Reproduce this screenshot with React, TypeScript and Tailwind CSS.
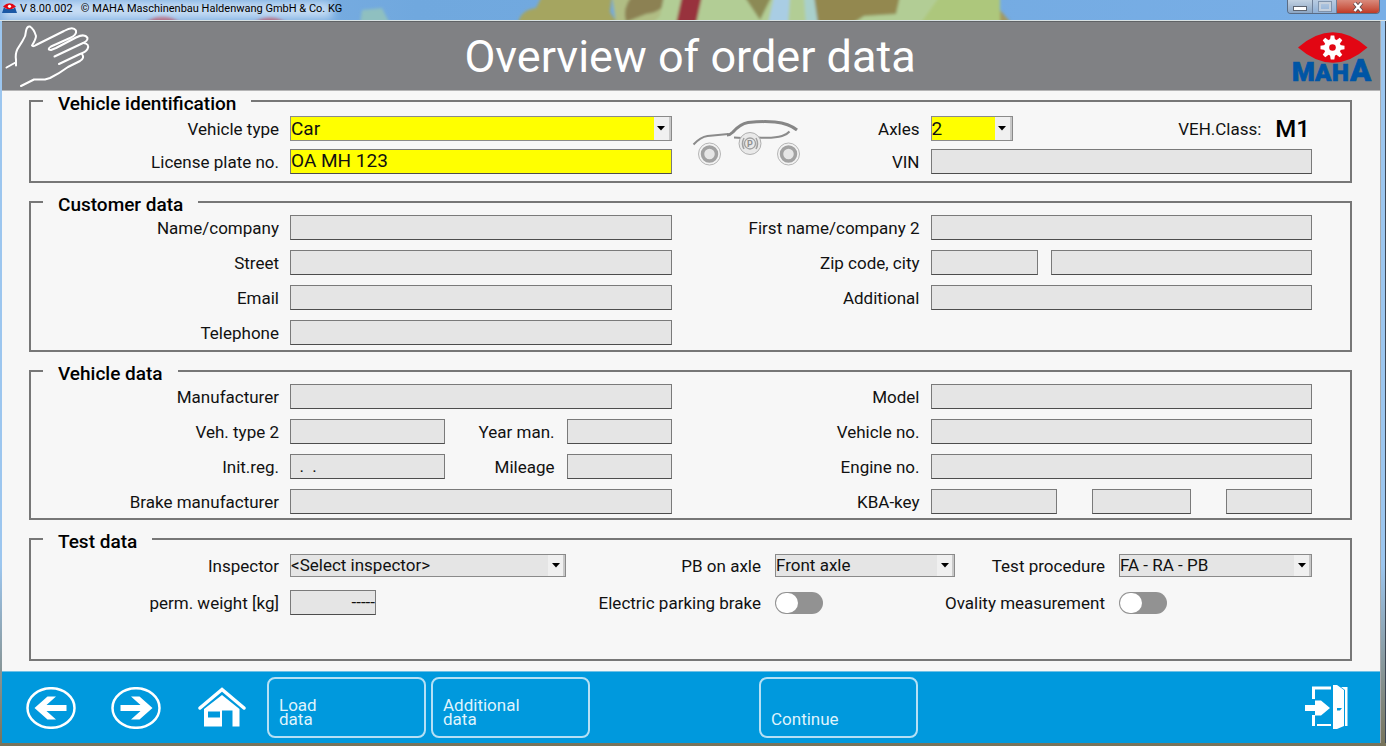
import { useState } from 'react';
import type { ReactNode } from 'react';
import clsx from 'clsx';

const boxStyle = 'h-[25px] min-w-0 border border-[#7a7a7a] border-b-[#4d4d4d] bg-[#e5e5e5] outline-none';

function Label({ id, children, className }: { id: string; children: ReactNode; className?: string }) {
  return (
    <label htmlFor={id} className={clsx('self-center justify-self-end text-right leading-5 whitespace-nowrap', className)}>
      {children}
    </label>
  );
}

function TextBox({ id, value = '', label, className }: { id: string; value?: string; label?: string; className?: string }) {
  return <input id={id} type="text" aria-label={label} defaultValue={value} className={clsx(boxStyle, className)} />;
}

function SelectBox({ id, options, yellow, className }: { id: string; options: string[]; yellow?: boolean; className?: string }) {
  return (
    <div className={clsx('relative', className)}>
      <select
        id={id}
        className={clsx(
          'block w-full appearance-none border border-[#8a8a8a] outline-none',
          yellow ? 'h-[25px] bg-[#ffff00] text-[19px] leading-5' : 'h-[23px] bg-[#e5e5e5] pb-px text-[17px] leading-5',
        )}
      >
        {options.map((o) => (
          <option key={o}>{o}</option>
        ))}
      </select>
      <span className="pointer-events-none absolute inset-y-px right-px flex w-[17px] items-center justify-center border-r-2 border-[#c8c8c8] bg-[#f0f0f0]">
        <svg width="8" height="5" viewBox="0 0 8 5">
          <path d="M0 0h8L4 4.5z" fill="#000" />
        </svg>
      </span>
    </div>
  );
}

function Group({ title, className, children }: { title: string; className?: string; children: ReactNode }) {
  return (
    <fieldset className={clsx('min-w-0 border-2 border-[#777] pr-[38px]', className)}>
      <legend className="ml-3 px-[15px] pt-1.5 text-[19px] leading-[14px] font-medium text-black">{title}</legend>
      {children}
    </fieldset>
  );
}

function Toggle({ id }: { id: string }) {
  const [on, setOn] = useState(false);
  return (
    <input
      id={id}
      type="checkbox"
      role="switch"
      checked={on}
      onChange={(e) => setOn(e.target.checked)}
      className="h-[22px] w-12 appearance-none self-center rounded-full bg-[#929292] p-px before:block before:h-5 before:w-[22px] before:rounded-full before:bg-white checked:bg-[#0099dd] checked:before:ml-6"
    />
  );
}

function Wallpaper() {
  return (
    <svg className="absolute inset-0 h-full w-full" viewBox="0 0 1386 21" preserveAspectRatio="none" aria-hidden="true">
      <defs>
        <filter id="soft" x="-5%" y="-50%" width="110%" height="200%">
          <feGaussianBlur stdDeviation="1.5" />
        </filter>
        <filter id="glow" x="-10%" y="-100%" width="120%" height="300%">
          <feGaussianBlur stdDeviation="5" />
        </filter>
        <linearGradient id="sky" x1="0" x2="1" y1="0" y2="0">
          <stop offset="0" stopColor="#8ab6e6" />
          <stop offset="0.3" stopColor="#70a8de" />
          <stop offset="1" stopColor="#78aee6" />
        </linearGradient>
      </defs>
      <rect width="1386" height="21" fill="url(#sky)" />
      <g filter="url(#soft)">
        <path d="M360 24l2-14 20-2 8 16z" fill="#8fc0c0" />
        <path d="M144 24q18-16 38 0zM252 24q18-14 36 0z" fill="#a24a66" />
        <path d="M518 24q2-14 18-16l6-12h70l-2 16 8 12z" fill="#a5a560" />
        <path d="M612-4h60l-6 28h-50z" fill="#b0bd84" />
        <path d="M632-4h38q-6 16-24 18l-20 8q-4-14 6-26z" fill="#8c8152" />
        <path d="M664-4h336v28H652l8-8z" fill="#b2cd95" />
        <path d="M682-4h20l-6 28h-20z" fill="#98313c" />
        <path d="M744-4h28l-12 24z" fill="#8c8a54" />
        <path d="M774-4h16l-2 28h-20z" fill="#a9cde4" />
        <path d="M804-4h12l10 28h-20z" fill="#a9d0cc" />
        <path d="M814-4h86l-4 18-32 2-12 8h-34z" fill="#93884f" />
        <path d="M940-4h60v28h-80z" fill="#adc77b" />
        <path d="M1000 10l12 14h-12z" fill="#a39a62" />
      </g>
      <rect x="4" y="2" width="328" height="16" fill="#e2eefb" opacity="0.75" filter="url(#glow)" />
      <rect y="20" width="1386" height="1" fill="#d9e2e4" />
    </svg>
  );
}

function TitleBar() {
  return (
    <div className="relative flex h-[21px] overflow-hidden">
      <Wallpaper />
      <div className="relative flex flex-1 items-center gap-[3px] pb-1 pl-0.5 text-[11px] leading-4 text-black">
        <svg width="15" height="11" viewBox="0 0 15 11" aria-hidden="true">
          <path d="M0 10l2-6 2 2h7l2-2 2 6z" fill="#1b58a5" />
          <path d="M1 3.500Q7.500-3 14 3.500 7.500 9 1 3.500z" fill="#e20613" />
          <circle cx="7.500" cy="3.300" r="1.600" fill="#fff" />
        </svg>
        <span className="whitespace-pre">V 8.00.002   © MAHA Maschinenbau Haldenwang GmbH &amp; Co. KG</span>
      </div>
      <div className="relative mr-[6px] flex h-[14px] overflow-hidden rounded-b border border-t-0 border-[#5a6c84]">
        <button aria-label="Minimize" className="flex w-[25px] items-end justify-center border-r border-[#6f8099] bg-linear-to-b from-[#c3d2e2] to-[#8ba6c4] pb-[3px]">
          <span className="h-[3px] w-3 bg-white outline outline-[#5d6470]" />
        </button>
        <button aria-label="Maximize" className="flex w-6 items-center justify-center border-r border-[#6f8099] bg-linear-to-b from-[#b9cce2] to-[#8fb0d6]">
          <span className="h-[9px] w-3 border-2 border-[#c5d0dd] outline outline-[#7f93ac]" />
        </button>
        <button aria-label="Close" className="flex w-[42px] items-center justify-center bg-linear-to-b from-[#d98a7c] to-[#c03a26]">
          <svg width="12" height="10" viewBox="0 0 12 10">
            <path d="M2.500 1l7 8M9.500 1l-7 8" stroke="#5b4a50" strokeWidth="4" />
            <path d="M2.500 1l7 8M9.500 1l-7 8" stroke="#fff" strokeWidth="2.400" />
          </svg>
        </button>
      </div>
    </div>
  );
}

function Hand() {
  return (
    <svg width="86" height="66" viewBox="4 24 86 66" fill="none" stroke="#fff" strokeWidth="2" strokeLinecap="round" strokeLinejoin="round" aria-hidden="true">
      <path d="M6.500 67.500L15.500 62.500M16 65.500V60Q15 54 17.500 49L22.500 41Q26 36 26 31 27 26 30 26.500 34 29 36 36 36 39 32 45.500 33 47 36 45L64 31Q73 26 76 30.500 77 35 70 38L51 46.500Q46.500 49.500 51 50L56 48 76 37.500Q85 33 87.500 38 88 41 82 43.500L54.500 56.500" />
      <path d="M83.500 43Q90 44 87.500 49 86 52 80 54L59 64M82 54Q85 58 80 61L68 67Q60 73 50 78L45 79.500H34L21 86" />
    </svg>
  );
}

function Logo() {
  const teeth = [0, 45, 90, 135, 180, 225, 270, 315];
  return (
    <svg width="86" height="64" viewBox="1291 26 86 64" role="img" aria-label="MAHA">
      <path d="M1299 48.500Q1334 18 1368.500 48.500 1334 79 1299 48.500z" fill="#e20613" />
      <g fill="#fff">
        {teeth.map((a) => (
          <path key={a} d="M1331 41l.7-4.500h3.600l.7 4.500z" transform={`rotate(${a} 1333.500 48.500)`} />
        ))}
        <circle cx="1333.500" cy="48.500" r="8.500" />
      </g>
      <circle cx="1333.500" cy="48.500" r="3.300" fill="#e20613" />
      <g className="font-[Roboto] font-black" fill="#0055a5" stroke="#0055a5" strokeWidth="0.700">
        <text x="1293" y="82" fontSize="26">M</text>
        <text x="1316" y="82" fontSize="24">A</text>
        <text x="1333" y="82" fontSize="24">H</text>
        <text x="1351" y="82" fontSize="31">A</text>
      </g>
    </svg>
  );
}

function Wheel({ cx }: { cx: number }) {
  return (
    <>
      <circle cx={cx} cy="154" r="11" fill="#f3f3f3" stroke="#b5b5b5" />
      <circle cx={cx} cy="154" r="7" fill="#e6e6e6" stroke="#a2a2a2" strokeWidth="3.500" />
    </>
  );
}

function CarPicture() {
  return (
    <svg width="109" height="50" viewBox="691 118 109 50" fill="none" role="img" aria-label="Car with parking brake">
      <path d="M693.500 144.500q7-7.500 14-8.500l21-2" stroke="#8b8b8b" strokeWidth="2" />
      <path d="M727 135q3 0 6-3 7-8 15-9.500 15-1.500 27-.5 14 1.500 22 8" stroke="#868686" strokeWidth="3" />
      <path d="M734 137.500l8 .5M758 137.500q16 1 24-1.500 5-1.500 7.500-4.500" stroke="#8b8b8b" strokeWidth="2" />
      <Wheel cx={709.5} />
      <Wheel cx={788.5} />
      <circle cx="750" cy="143.500" r="11" fill="#e9e9e9" stroke="#b0b0b0" />
      <circle cx="750" cy="143.500" r="5.500" stroke="#a0a0a0" strokeWidth="1.300" />
      <path d="M744 138q-3 5.500 0 11M756 138q3 5.500 0 11" stroke="#a0a0a0" strokeWidth="1.500" />
      <text x="750" y="147" textAnchor="middle" fontSize="9" className="font-[Roboto] font-bold" fill="#909090">P</text>
    </svg>
  );
}

function ArrowIcon({ right }: { right?: boolean }) {
  return (
    <svg width="50" height="42" viewBox="0 0 50 42" aria-hidden="true">
      <ellipse cx="25" cy="21" rx="23.500" ry="19.800" fill="none" stroke="#fff" strokeWidth="2.500" />
      <path transform={right ? 'matrix(-1 0 0 1 50 0)' : undefined} d="M8.500 21l13-11.500h8.500l-9.500 8.500h20v6h-20l9.500 8.500h-8.500z" fill="#fff" />
    </svg>
  );
}

function HomeIcon() {
  return (
    <svg width="50" height="42" viewBox="196 687 50 42" aria-hidden="true">
      <path d="M200 708L222 689.500l22 18.500" fill="none" stroke="#fff" strokeWidth="3.500" strokeLinecap="round" />
      <path fillRule="evenodd" d="M222 695l17.500 14v17.500h-7v-16h-10.500v16h-18v-17.500zM208 711.500v6h12v-6z" fill="#fff" />
    </svg>
  );
}

function ExitIcon() {
  return (
    <svg width="44" height="46" viewBox="1304 685 44 46" fill="#fff" aria-hidden="true">
      <path d="M1312 699v-12.500h19v3h-16V699zM1312 715h3v11h-3zM1317 724h14v2h-14zM1341 687h6.500v39h-2.500v-36z" />
      <path fillRule="evenodd" d="M1333 685h4l7 5v36l-7 3h-4zM1337 708v2.500h3l2-2.500z" />
      <path d="M1305 705h10v-4.500h6l9 7.500-9 7.500h-6V711h-10z" />
    </svg>
  );
}

function FooterButton({ children, className }: { children: ReactNode; className?: string }) {
  return (
    <button className={clsx('flex h-[61px] w-[159px] items-end rounded-lg border-2 border-[#b5e0f5] pb-[10px] pl-[10px] text-left leading-[14px] text-[#dff3fc]', className)}>
      {children}
    </button>
  );
}

const twoColumns = 'grid grid-cols-[248px_minmax(0,1fr)_237px_minmax(0,1fr)] gap-x-[11px] gap-y-[10px] pt-[3px]';

export default function App() {
  return (
    <div className="flex min-h-screen flex-col bg-[#2b2a22] font-[Roboto,sans-serif] text-[17px] text-[#111]">
      <TitleBar />
      <div className="flex flex-1 bg-linear-to-b from-[#9cc6ef] from-75% to-[#77735a] pb-[3px] pl-0.5">
        <div className="flex min-w-0 flex-1 flex-col bg-[#f7f7f7]">
          <header className="flex h-[70px] items-center justify-between border-t border-b border-t-[#5f6265] border-b-[#b5b5b6] bg-[#808184] pt-0.5 pr-1 pl-0.5">
            <Hand />
            <h1 className="text-[45px] leading-[50px] whitespace-nowrap text-white">Overview of order data</h1>
            <Logo />
          </header>

          <main className="flex flex-1 flex-col gap-[9px] pr-7 pb-[10px] pl-[27px]">
            <Group title="Vehicle identification" className="pb-[7px]">
              <div className="grid grid-cols-[248px_minmax(0,1fr)_117px_109px_minmax(0,1fr)] gap-x-[11px] gap-y-2 pt-[5px]">
                <Label id="type">Vehicle type</Label>
                <SelectBox id="type" options={['Car', 'Truck', 'Motorcycle']} yellow />
                <div className="row-span-2 flex justify-end pt-0.5">
                  <CarPicture />
                </div>
                <Label id="axles">Axles</Label>
                <div className="flex items-center justify-between">
                  <SelectBox id="axles" options={['2', '3', '4']} yellow className="w-[82px]" />
                  <p className="flex items-center gap-[14px] leading-5">
                    VEH.Class: <span className="pr-0.5 text-2xl leading-6 font-medium text-black">M1</span>
                  </p>
                </div>
                <Label id="plate">License plate no.</Label>
                <TextBox id="plate" value="OA MH 123" className="bg-[#ffff00]! text-[19px]" />
                <Label id="vin">VIN</Label>
                <TextBox id="vin" />
              </div>
            </Group>

            <Group title="Customer data" className="pb-[5px]">
              <div className={twoColumns}>
                <Label id="name">Name/company</Label>
                <TextBox id="name" />
                <Label id="name2">First name/company 2</Label>
                <TextBox id="name2" />
                <Label id="street">Street</Label>
                <TextBox id="street" />
                <Label id="zip">Zip code, city</Label>
                <div className="flex gap-[13px]">
                  <TextBox id="zip" className="w-[107px]" />
                  <TextBox id="city" label="City" className="flex-1" />
                </div>
                <Label id="email">Email</Label>
                <TextBox id="email" />
                <Label id="additional">Additional</Label>
                <TextBox id="additional" />
                <Label id="phone">Telephone</Label>
                <TextBox id="phone" />
              </div>
            </Group>

            <Group title="Vehicle data" className="pb-1">
              <div className={twoColumns}>
                <Label id="maker">Manufacturer</Label>
                <TextBox id="maker" />
                <Label id="model">Model</Label>
                <TextBox id="model" />
                <Label id="type2">Veh. type 2</Label>
                <div className="flex gap-3">
                  <TextBox id="type2" className="w-[155px]" />
                  <Label id="year" className="flex-1">Year man.</Label>
                  <TextBox id="year" className="w-[105px]" />
                </div>
                <Label id="vehno">Vehicle no.</Label>
                <TextBox id="vehno" />
                <Label id="initreg">Init.reg.</Label>
                <div className="flex gap-3">
                  <TextBox id="initreg" value="  .  ." className="w-[155px]" />
                  <Label id="mileage" className="flex-1">Mileage</Label>
                  <TextBox id="mileage" className="w-[105px]" />
                </div>
                <Label id="engine">Engine no.</Label>
                <TextBox id="engine" />
                <Label id="brake">Brake manufacturer</Label>
                <TextBox id="brake" />
                <Label id="kba">KBA-key</Label>
                <div className="flex justify-between">
                  <TextBox id="kba" className="w-[126px]" />
                  <TextBox id="kba2" label="KBA-key 2" className="w-[99px]" />
                  <TextBox id="kba3" label="KBA-key 3" className="w-[86px]" />
                </div>
              </div>
            </Group>

            <Group title="Test data" className="flex-1">
              <div className="grid grid-cols-[248px_minmax(0,276fr)_187px_minmax(0,180fr)_142px_minmax(0,193fr)] gap-x-[11px] gap-y-[13px] pt-[5px]">
                <Label id="inspector">Inspector</Label>
                <SelectBox id="inspector" options={['<Select inspector>']} />
                <Label id="pb" className="pr-[3px]">PB on axle</Label>
                <SelectBox id="pb" options={['Front axle', 'Rear axle']} />
                <Label id="procedure" className="pr-[3px]">Test procedure</Label>
                <SelectBox id="procedure" options={['FA - RA - PB', 'FA - RA']} />
                <Label id="weight">perm. weight [kg]</Label>
                <TextBox id="weight" value="-----" className="w-[86px] text-right" />
                <Label id="epb" className="pr-[3px]">Electric parking brake</Label>
                <Toggle id="epb" />
                <Label id="ovality" className="pr-[3px]">Ovality measurement</Label>
                <Toggle id="ovality" />
              </div>
            </Group>
          </main>

          <footer className="flex h-[72px] items-center border-t border-[#6fc0e6] bg-[#0099dd] pr-8 pl-6">
            <div className="flex gap-[35px]">
              <button aria-label="Back"><ArrowIcon /></button>
              <button aria-label="Forward"><ArrowIcon right /></button>
              <button aria-label="Home"><HomeIcon /></button>
            </div>
            <FooterButton className="ml-[21px]">Load<br />data</FooterButton>
            <FooterButton className="ml-[5px]">Additional<br />data</FooterButton>
            <FooterButton className="ml-[169px]">Continue</FooterButton>
            <button aria-label="Exit" className="ml-auto"><ExitIcon /></button>
          </footer>
        </div>
        <div className="w-[6px] border-r border-l border-r-[#3c4654] border-l-[#a7abae]" />
      </div>
    </div>
  );
}
